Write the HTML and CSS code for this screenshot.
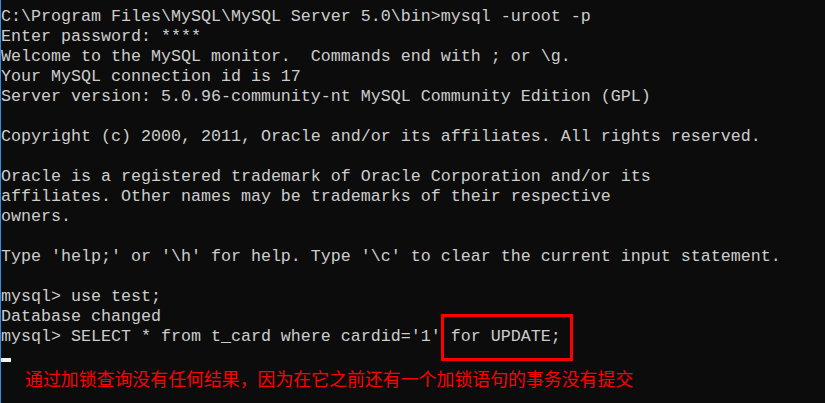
FILE: index.html
```html
<!DOCTYPE html>
<html lang="en">
<head>
  <meta charset="UTF-8">
  <title>MySQL Console</title>
  <link rel="stylesheet" href="styles.css">
</head>
<body>
  <div class="console">
<pre class="output">C:\Program Files\MySQL\MySQL Server 5.0\bin>mysql -uroot -p
Enter password: ****
Welcome to the MySQL monitor.  Commands end with ; or \g.
Your MySQL connection id is 17
Server version: 5.0.96-community-nt MySQL Community Edition (GPL)

Copyright (c) 2000, 2011, Oracle and/or its affiliates. All rights reserved.

Oracle is a registered trademark of Oracle Corporation and/or its
affiliates. Other names may be trademarks of their respective
owners.

Type 'help;' or '\h' for help. Type '\c' to clear the current input statement.

mysql> use test;
Database changed
mysql> SELECT * from t_card where cardid='1' <span class="mark">for UPDATE;</span>
<span class="cursor"></span></pre>
    <p class="note">通过加锁查询没有任何结果，因为在它之前还有一个加锁语句的事务没有提交</p>
  </div>
</body>
</html>
```

FILE: styles.css
```css
body {
  margin: 0;
  background: #0c0c0c;
}

.console {
  height: 403px;
  border-left: 1px solid #3d8ad6;
  background: #0c0c0c;
  color: #cccccc;
  overflow: hidden;
}

.output {
  margin: 0;
  padding-top: 7px;
  font-family: "Liberation Mono", monospace;
  font-size: 16.667px;
  line-height: 20px;
  white-space: pre;
}

/* red box drawn round the locking clause */
.mark {
  position: relative;
}

.mark::after {
  content: "";
  position: absolute;
  left: -10px;
  right: -12px;
  top: -13px;
  bottom: -15px;
  border: 3px solid #ff0000;
}

.cursor {
  display: inline-block;
  width: 10px;
  height: 4px;
  background: #f2f2f2;
  vertical-align: -1px;
}

.note {
  margin: 0;
  padding-left: 24px;
  margin-top: -1px;
  font-family: "Noto Sans CJK SC", sans-serif;
  font-size: 17.9px;
  line-height: 24px;
  color: #ff0000;
}
```
